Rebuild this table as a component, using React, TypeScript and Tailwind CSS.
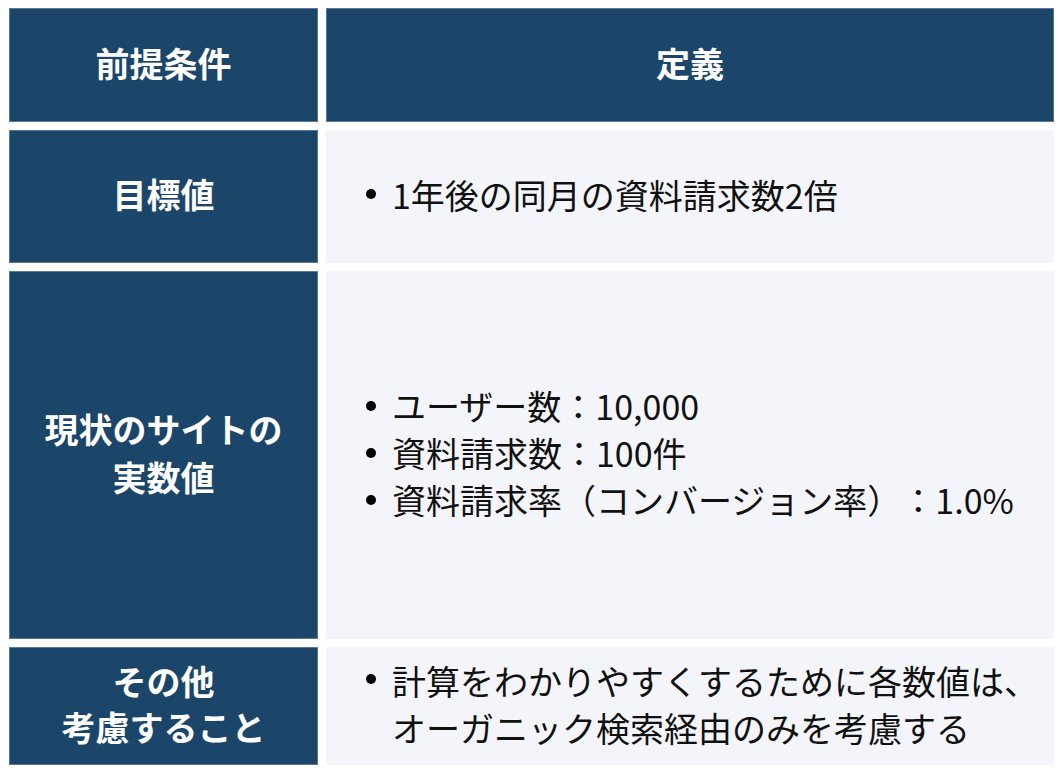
import React from "react";

const font = { fontFamily: '"Noto Sans CJK JP", "Noto Sans", sans-serif' };

function Bullet({ children, h = "h-[47px]" }: { children: React.ReactNode; h?: string }) {
  return (
    <div className="flex items-start">
      <div className={"w-[26px] flex items-center shrink-0 " + h}>
        <span className="block w-[10px] h-[10px] rounded-full bg-black" />
      </div>
      <div className="whitespace-nowrap">{children}</div>
    </div>
  );
}

export default function App() {
  const head =
    "bg-[#1c4669] border border-[#587a96] flex items-center justify-center text-center text-white font-bold text-[34px] leading-[46px] pb-[5px]";
  const body =
    "bg-[#f4f5fa] flex flex-col justify-center pl-[40px] pb-[5px] text-[#111111] text-[34px] leading-[47px] font-normal";
  return (
    <div
      className="w-[1062px] h-[776px] bg-white pt-[8px] pl-[9px] pr-[8px] [text-spacing-trim:space-all]"
      style={font}
    >
      <div className="grid grid-cols-[309px_728px] grid-rows-[114px_133px_368px_118px] gap-[8px]">
        <div className={head}>前提条件</div>
        <div className={head}>定義</div>

        <div className={head}>目標値</div>
        <div className={body}>
          <Bullet>1年後の同月の資料請求数2倍</Bullet>
        </div>

        <div className={head + " leading-[48px]"}>
          <div>
            現状のサイトの
            <br />
            実数値
          </div>
        </div>
        <div className={body}>
          <Bullet>ユーザー数：10,000</Bullet>
          <Bullet>資料請求数：100件</Bullet>
          <Bullet>資料請求率（コンバージョン率）：1.0%</Bullet>
        </div>

        <div className={head + " leading-[45px]"}>
          <div>
            その他
            <br />
            考慮すること
          </div>
        </div>
        <div className={body + " leading-[45px]"}>
          <Bullet h="h-[45px]">
            計算をわかりやすくするために各数値は、
            <br />
            オーガニック検索経由のみを考慮する
          </Bullet>
        </div>
      </div>
    </div>
  );
}
